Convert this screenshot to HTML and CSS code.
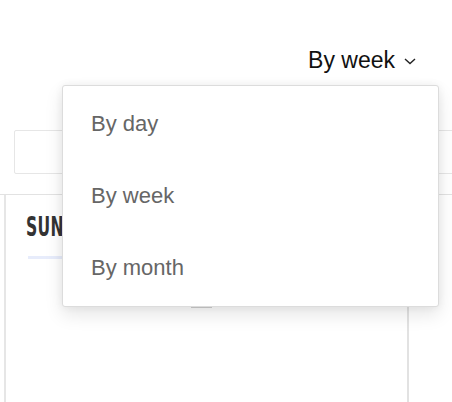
FILE: index.html
```html
<!DOCTYPE html>
<html>
<head>
<meta charset="utf-8">
<link rel="stylesheet" href="styles.css">
</head>
<body>
<div class="app">
  <div class="toolbar">
    <button class="trigger">By week
      <svg class="chev" width="12" height="7" viewBox="0 0 12 7"><path d="M1 1 L6 5.5 L11 1" fill="none" stroke="#222" stroke-width="1.4"/></svg>
    </button>
  </div>
  <div class="search"></div>
  <div class="calendar">
    <div class="col">
      <div class="dayname">SUN</div>
      <div class="underline"></div>
      <div class="marker"></div>
    </div>
  </div>
  <div class="dropdown">
    <div class="item">By day</div>
    <div class="item">By week</div>
    <div class="item">By month</div>
  </div>
</div>
</body>
</html>
```
FILE: styles.css
```css
html, body {
  margin: 0;
  padding: 0;
  background: #fff;
}
.app {
  position: relative;
  width: 452px;
  height: 402px;
  overflow: hidden;
  font-family: "Liberation Sans", Arial, Helvetica, sans-serif;
}
.toolbar {
  display: flex;
  justify-content: flex-end;
  padding-top: 46px;
  padding-right: 36px;
  height: 28px;
}
.trigger {
  display: flex;
  align-items: center;
  gap: 9px;
  border: 0;
  background: none;
  padding: 0;
  font-family: inherit;
  font-size: 23px;
  line-height: 28px;
  color: #111;
}
.chev {
  margin-top: 2px;
}
.search {
  margin: 56px -4px 0 14px;
  height: 42px;
  border: 1px solid #e6e6e6;
  border-radius: 2px;
}
.calendar {
  margin-top: 20px;
  border-top: 1px solid #e2e2e2;
  display: flex;
  height: 220px;
}
.col {
  box-sizing: border-box;
  margin-left: 4px;
  width: 405px;
  border-left: 2px solid #e6e6e6;
  border-right: 2px solid #e2e2e2;
  padding-left: 20px;
  display: flex;
  flex-direction: column;
}
.dayname {
  margin-top: 21px;
  font-family: "DejaVu Sans", sans-serif;
  font-weight: bold;
  font-size: 26px;
  line-height: 22px;
  height: 22px;
  color: #333;
  transform: scaleX(0.6);
  transform-origin: left center;
  letter-spacing: 0.5px;
}
.underline {
  margin-top: 18px;
  margin-left: 2px;
  width: 120px;
  height: 3px;
  background: #e7ecfb;
}
.marker {
  margin-top: 47px;
  margin-left: 165px;
  width: 21px;
  height: 2px;
  background: #cfcfcf;
}
.dropdown {
  position: absolute;
  left: 62px;
  top: 85px;
  width: 375px;
  padding: 2px 0;
  background: #fff;
  border: 1px solid #dcdcdc;
  border-radius: 3px;
  box-shadow: 0 8px 18px rgba(0, 0, 0, 0.10), 0 0 8px rgba(0, 0, 0, 0.06);
}
.item {
  height: 72px;
  display: flex;
  align-items: center;
  padding-left: 28px;
  font-size: 22px;
  color: #666;
}
```
